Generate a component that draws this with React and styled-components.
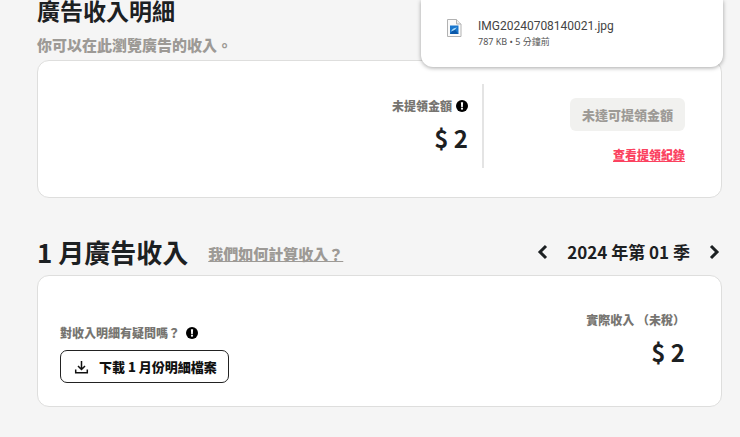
import styled, { createGlobalStyle } from "styled-components";

const GlobalStyle = createGlobalStyle`
  * {
    box-sizing: border-box;
  }

  body {
    margin: 0;
    background-color: #f5f5f5;
    color: #1c2022;
    font-family: "Noto Sans CJK TC", "Noto Sans", sans-serif;
    font-weight: 900;
  }

  h1, h2, p {
    margin: 0;
  }

  h1, h2 {
    font-weight: 700;
  }

  button {
    font: inherit;
    color: inherit;
    cursor: pointer;
  }
`;

const Page = styled.main`
  padding: 0 18px 30px 37px;
`;

const PageTitle = styled.h1`
  font-size: 23px;
  line-height: 20px;
`;

const Subtitle = styled.p`
  margin-top: 14px;
  padding-bottom: 4px;
  font-size: 15px;
  line-height: 22px;
  color: #9d9a96;
`;

const Card = styled.section`
  display: flex;
  justify-content: ${({ $justify }) => $justify};
  padding: 23px 36px 29px 22px;
  background-color: #fff;
  border: 1px solid #dededd;
  border-radius: 12px;
`;

const Balance = styled.div`
  display: flex;
  flex-direction: column;
  align-items: flex-end;
  padding: 12px 14px 16px 0;
  border-right: 2px solid #e4e4e4;
`;

const Label = styled.div`
  display: flex;
  align-items: center;
  gap: ${({ $gap }) => $gap || "4px"};
  font-size: 12px;
  line-height: 20px;
  color: #777571;
`;

const Amount = styled.div`
  margin-top: 8px;
  font-size: 24px;
  font-weight: 700;
  line-height: 28px;
`;

const Withdraw = styled.div`
  display: flex;
  flex-direction: column;
  align-items: flex-end;
  width: 201px;
  padding-top: 14px;
`;

const WithdrawButton = styled.button`
  padding: 6px 12px;
  border: 0;
  border-radius: 6px;
  background-color: #f1f1ef;
  font-size: 13px;
  line-height: 21px;

  &:disabled {
    color: #9d9a96;
    cursor: default;
  }
`;

const HistoryLink = styled.a`
  margin-top: 14px;
  font-size: 12px;
  line-height: 20px;
  color: #fb4260;
`;

const SectionHeader = styled.header`
  display: flex;
  align-items: center;
  margin-top: 36px;
  padding-bottom: 5px;
`;

const SectionTitle = styled.h2`
  font-size: 26px;
  line-height: 36px;
`;

const HelpLink = styled.a`
  margin: 4px auto 0 20px;
  font-size: 15px;
  line-height: 22px;
  color: #9d9a96;
`;

const QuarterPicker = styled.div`
  display: flex;
  align-items: center;
  gap: 16px;
  font-size: 17px;
  font-weight: 700;
  line-height: 24px;
`;

const ArrowButton = styled.button`
  display: flex;
  padding: 0;
  border: 0;
  background: none;
`;

const Details = styled.div`
  display: flex;
  flex-direction: column;
  align-items: flex-start;
  gap: 7px;
  padding-top: 24px;
  margin-bottom: -6px;
`;

const DownloadButton = styled.button`
  display: flex;
  align-items: center;
  gap: 10px;
  padding: 5px 11px 5px 13px;
  border: 1px solid #222;
  border-radius: 7px;
  background-color: #fff;
  color: #111;
  font-size: 13px;
  line-height: 21px;
`;

const Income = styled.div`
  display: flex;
  flex-direction: column;
  align-items: flex-end;
  padding-top: 11px;
`;

// Browser download bubble floating over the page
const DownloadBubble = styled.aside`
  position: absolute;
  top: 0;
  right: 17px;
  display: flex;
  align-items: flex-start;
  gap: 16px;
  width: 302px;
  padding: 18px 26px 18px;
  border-radius: 0 0 12px 12px;
  background-color: #fff;
  box-shadow: 0 1px 4px rgba(0, 0, 0, 0.35);
  font-family: "Noto Sans", "Noto Sans CJK TC", sans-serif;
  font-weight: 400;
`;

const FileName = styled.p`
  font-family: Roboto, sans-serif;
  font-size: 12px;
  line-height: 16px;
  color: #444;
`;

const FileMeta = styled.p`
  font-size: 9px;
  line-height: 15px;
  color: #555;
`;

function InfoIcon() {
  return (
    <svg width="12" height="12" viewBox="0 0 12 12" aria-hidden="true">
      <circle cx="6" cy="6" r="6" fill="#000" />
      <path d="M4.9 2.3h2.2L6.8 6.9H5.2z" fill="#fff" />
      <circle cx="6" cy="8.7" r="1.1" fill="#fff" />
    </svg>
  );
}

function Chevron({ direction }) {
  return (
    <svg width="16" height="16" viewBox="0 0 16 16" aria-hidden="true">
      <path
        d={direction === "left" ? "M11 2 5 8l6 6" : "M5 2l6 6-6 6"}
        fill="none"
        stroke="#1c2022"
        strokeWidth="3"
      />
    </svg>
  );
}

function DownloadIcon() {
  return (
    <svg
      width="15"
      height="14"
      viewBox="0 0 15 14"
      fill="none"
      stroke="#111"
      strokeWidth="1.5"
      aria-hidden="true"
    >
      <path d="M7.5 1v8.2M4 6l3.5 3.5L11 6M1.7 9.5v3.2h11.6V9.5" />
    </svg>
  );
}

function ImageFileIcon() {
  return (
    <svg width="15" height="20" viewBox="0 0 15 20" aria-hidden="true">
      <path
        d="M.5 1.5h9L14 6v12.5H.5z"
        fill="#fafafa"
        stroke="#b2b2b2"
      />
      <path d="M9.5 1.5V6H14" fill="#eee" stroke="#b2b2b2" />
      <path d="M3 7.5h8.5V16H3z" fill="#1976cd" />
      <path d="M3 16l4-5.5 4.5 5.5z" fill="#0b57a8" />
      <path d="M4 13.5c1-2.5 2.5-3.5 6-4L7.500 12z" fill="#a9dcfb" />
    </svg>
  );
}

function App() {
  return (
    <>
      <GlobalStyle />
      <Page>
        <PageTitle>廣告收入明細</PageTitle>
        <Subtitle>你可以在此瀏覽廣告的收入。</Subtitle>
        <Card $justify="flex-end">
          <Balance>
            <Label>
              未提領金額
              <InfoIcon />
            </Label>
            <Amount>$ 2</Amount>
          </Balance>
          <Withdraw>
            <WithdrawButton disabled>未達可提領金額</WithdrawButton>
            <HistoryLink href="#history">查看提領紀錄</HistoryLink>
          </Withdraw>
        </Card>

        <SectionHeader>
          <SectionTitle>1 月廣告收入</SectionTitle>
          <HelpLink href="#help">我們如何計算收入？</HelpLink>
          <QuarterPicker>
            <ArrowButton aria-label="上一季">
              <Chevron direction="left" />
            </ArrowButton>
            <span>2024 年第 01 季</span>
            <ArrowButton aria-label="下一季">
              <Chevron direction="right" />
            </ArrowButton>
          </QuarterPicker>
        </SectionHeader>
        <Card $justify="space-between">
          <Details>
            <Label $gap="6px">
              對收入明細有疑問嗎？
              <InfoIcon />
            </Label>
            <DownloadButton>
              <DownloadIcon />
              下載 1 月份明細檔案
            </DownloadButton>
          </Details>
          <Income>
            <Label>實際收入 （未稅）</Label>
            <Amount>$ 2</Amount>
          </Income>
        </Card>
      </Page>

      <DownloadBubble>
        <ImageFileIcon />
        <div>
          <FileName>IMG20240708140021.jpg</FileName>
          <FileMeta>787 KB • 5 分鐘前</FileMeta>
        </div>
      </DownloadBubble>
    </>
  );
}

export default App;
